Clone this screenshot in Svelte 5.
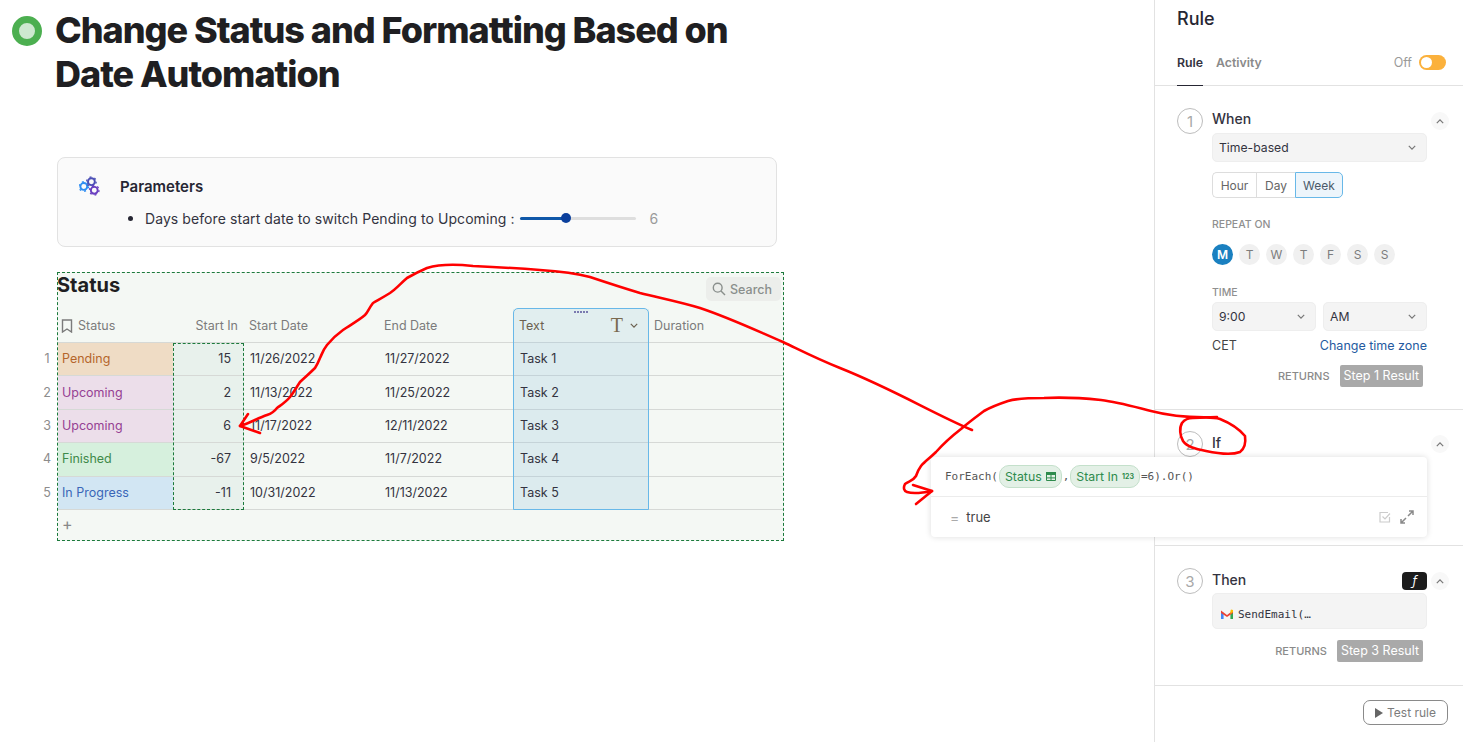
<script>
  const columns = ['Start In', 'Start Date', 'End Date'];
  const rows = [
    { status: 'Pending', tone: 'pending', startIn: 15, start: '11/26/2022', end: '11/27/2022', text: 'Task 1' },
    { status: 'Upcoming', tone: 'upcoming', startIn: 2, start: '11/13/2022', end: '11/25/2022', text: 'Task 2' },
    { status: 'Upcoming', tone: 'upcoming', startIn: 6, start: '11/17/2022', end: '12/11/2022', text: 'Task 3' },
    { status: 'Finished', tone: 'finished', startIn: -67, start: '9/5/2022', end: '11/7/2022', text: 'Task 4' },
    { status: 'In Progress', tone: 'progress', startIn: -11, start: '10/31/2022', end: '11/13/2022', text: 'Task 5' },
  ];
  const days = ['M', 'T', 'W', 'T', 'F', 'S', 'S'];
  const gears = [
    { x: 5, y: 11, color: '#2e8df2' },
    { x: 13, y: 6, color: '#4b4fb5' },
    { x: 16, y: 15, color: '#6a3fc0' },
  ];
</script>

{#snippet chevron(up = false)}
  <svg class="chev" viewBox="0 0 10 6" width="8" height="5">
    <path d={up ? 'M1 5 L5 1 L9 5' : 'M1 1 L5 5 L9 1'} fill="none" stroke="currentColor" stroke-width="1.5" />
  </svg>
{/snippet}

{#snippet collapse()}
  <span class="collapse">{@render chevron(true)}</span>
{/snippet}

<div class="page">
  <main class="main">
    <header class="title">
      <span class="dot"></span>
      <h1>Change Status and Formatting Based on Date Automation</h1>
    </header>

    <section class="params">
      <div class="params-head">
        <svg viewBox="0 0 22 21" width="21" height="20">
          {#each gears as g}
            <circle cx={g.x} cy={g.y} r="3.6" fill="none" stroke={g.color} stroke-width="2" />
            <circle cx={g.x} cy={g.y} r="5" fill="none" stroke={g.color} stroke-width="1.4" stroke-dasharray="2 3.24" />
          {/each}
        </svg>
        <strong>Parameters</strong>
      </div>
      <div class="param-row">
        <span class="bullet"></span>
        <span class="param-label">Days before start date to switch Pending to Upcoming :</span>
        <span class="slider"><span class="slider-fill"></span><span class="slider-thumb"></span></span>
        <span class="param-value">6</span>
      </div>
    </section>

    <section class="widget">
      <div class="widget-head">
        <h2>Status</h2>
        <span class="search">
          <svg viewBox="0 0 14 14" width="14" height="14">
            <circle cx="5.7" cy="5.7" r="4.4" fill="none" stroke="currentColor" stroke-width="1.4" />
            <path d="M9 9 L13 13" stroke="currentColor" stroke-width="1.5" />
          </svg>
          Search
        </span>
      </div>

      <div class="grid">
        <div class="cell head status-head">
          <svg viewBox="0 0 12 14" width="12" height="14">
            <path d="M1.5 1 H10.5 V13 L6 10 L1.5 13 Z" fill="none" stroke="currentColor" stroke-width="1.4" />
          </svg>
          Status
        </div>
        {#each columns as c, i}
          <div class="cell head" class:right={i === 0}>{c}</div>
        {/each}
        <div class="cell head text-head">
          Text
          <span class="type-t">T</span>
          {@render chevron()}
        </div>
        <div class="cell head">Duration</div>

        {#each rows as r, i}
          <div class="cell body status {r.tone}">
            <span class="row-num">{i + 1}</span>
            {r.status}
          </div>
          <div class="cell body right start-in">{r.startIn}</div>
          <div class="cell body">{r.start}</div>
          <div class="cell body">{r.end}</div>
          <div class="cell body text-col">{r.text}</div>
          <div class="cell body"></div>
        {/each}

        <span class="sel-start"></span>
        <span class="sel-text"><span class="grip"></span></span>
      </div>
      <div class="add">+</div>
    </section>
  </main>

  <aside class="side">
    <h3>Rule</h3>
    <nav class="tabs">
      <span class="tab active">Rule</span>
      <span class="tab">Activity</span>
      <span class="off">Off</span>
      <span class="toggle"><span class="knob"></span></span>
    </nav>

    <section class="step step1">
      <div class="step-head">
        <span class="num">1</span>
        <span class="step-name">When</span>
        {@render collapse()}
      </div>
      <div class="step-body">
        <div class="select">Time-based {@render chevron()}</div>
        <div class="segments">
          <span class="seg hour">Hour</span>
          <span class="seg day">Day</span>
          <span class="seg week">Week</span>
        </div>
        <div class="label repeat">REPEAT ON</div>
        <div class="days">
          {#each days as d, i}
            <span class="daydot" class:on={i === 0}>{d}</span>
          {/each}
        </div>
        <div class="label time">TIME</div>
        <div class="time-row">
          <div class="select">9:00 {@render chevron()}</div>
          <div class="select">AM {@render chevron()}</div>
        </div>
        <div class="zone"><span>CET</span><span class="link">Change time zone</span></div>
        <div class="returns"><span>RETURNS</span><span class="result">Step 1 Result</span></div>
      </div>
    </section>

    <section class="step step2">
      <div class="step-head">
        <span class="num">2</span>
        <span class="step-name">If</span>
        {@render collapse()}
      </div>
      <div class="popup">
        <div class="formula">ForEach(<span class="pill">Status<svg viewBox="0 0 10 9" width="10" height="9"><path d="M.5.5h9v8h-9zM.5 5.9h9M5 3v5.5" fill="none" stroke="currentColor" /><path d="M0 0h10v3H0z" fill="currentColor" /></svg></span>,<span class="pill">Start In<small>123</small></span>=6).Or()</div>
        <div class="outcome">
          <span class="eq">=</span>
          <span>true</span>
          <svg class="check" viewBox="0 0 12 12" width="12" height="12">
            <path d="M10.5 6v5H1V1.5h8" fill="none" stroke="#ccc" stroke-width="1.2" />
            <path d="M3.5 5.5 L6 8 L11 2.5" fill="none" stroke="#ccc" stroke-width="1.2" />
          </svg>
          <svg class="expand" viewBox="0 0 14 14" width="14" height="14">
            <path d="M8 6 L13 1 M9 1 H13 V5 M6 8 L1 13 M1 9 V13 H5" fill="none" stroke="#8a8a8a" stroke-width="1.5" />
          </svg>
        </div>
      </div>
    </section>

    <section class="step step3">
      <div class="step-head">
        <span class="num">3</span>
        <span class="step-name">Then</span>
        <span class="fx">ƒ</span>
        {@render collapse()}
      </div>
      <div class="step-body">
        <div class="action">
          <svg viewBox="0 0 12 10" width="12" height="10">
            <path d="M0 2 L0 10 H2.6 V4 Z" fill="#4285f4" />
            <path d="M12 2 L12 10 H9.4 V4 Z" fill="#34a853" />
            <path d="M0 1.5 L6 6 L12 1.5 L12 4 L6 8 L0 4 Z" fill="#ea4335" />
            <path d="M10 .5 L12 1 V3 L9.4 5 V2 Z" fill="#fbbc04" />
          </svg>
          <span>SendEmail(…</span>
        </div>
        <div class="returns"><span>RETURNS</span><span class="result">Step 3 Result</span></div>
      </div>
    </section>

    <footer class="foot">
      <span class="test">
        <svg viewBox="0 0 8 10" width="8" height="10"><path d="M0 0 L8 5 L0 10 Z" fill="#666" /></svg>
        Test rule
      </span>
    </footer>
  </aside>

  <!-- hand drawn annotation on top of the screenshot -->
  <svg class="ink" viewBox="0 0 1463 742" width="1463" height="742">
    <path d="M972 430 C930 412 895 390 840 368 C815 358 800 350 783 342 C755 330 730 318 700 308 C680 302 660 298 640 293 C620 287 605 282 590 277 C575 273 555 271 540 270 C515 268 495 267 473 266 C455 264 440 264 427 268 C420 271 414 274 407 278 C400 284 396 289 390 293 C382 298 378 300 373 303 C369 308 368 312 365 315 C358 321 350 325 343 330 C336 335 331 340 327 345 C323 350 322 354 320 358 C318 363 317 365 315 368 C309 374 305 377 300 382 C296 388 294 392 290 397 C286 402 281 405 277 408 C274 412 270 414 267 415 C258 418 250 423 240 426" />
    <path d="M248 414 L240 426 L260 433" />
    <path d="M1217 417 C1195 418 1170 416 1151 411 C1135 407 1118 402 1101 400 C1082 398 1062 397 1044 398 C1030 398 1018 398 1008 401 C999 404 991 407 984 411 C976 417 969 422 961 429 C952 436 944 443 936 452 C930 458 925 461 921 466 C918 470 917 473 916 476 C913 481 909 481 905 484 C903 488 904 491 907 492 C913 494 922 493 932 491" />
    <path d="M913 485 L932 491 L916 504" />
    <path d="M1193 418 C1205 417 1214 417 1220 419 C1230 423 1240 430 1245 436 C1246 443 1244 449 1240 452 C1232 455 1220 454 1206 451 C1196 449 1187 447 1183 441 C1180 436 1179 428 1182 423 C1185 419 1188 418 1193 418" />
  </svg>
</div>

<style>
  :global(body) {
    margin: 0;
    background: #fff;
    color: #262633;
    font-family: Inter, "Liberation Sans", sans-serif;
    font-size: 13px;
  }

  .page {
    position: relative;
    display: flex;
    width: 1463px;
    height: 742px;
    overflow: hidden;
  }

  .main {
    width: 1154px;
    flex: none;
    padding-top: 8px;
    box-sizing: border-box;
  }

  .title {
    display: flex;
    align-items: flex-start;
    padding-left: 12px;
  }

  .dot {
    box-sizing: border-box;
    width: 30px;
    height: 30px;
    margin-top: 8px;
    margin-right: 13px;
    flex: none;
    border-radius: 50%;
    background: #cde8cf;
    border: 7px solid #4caf50;
  }

  h1 {
    margin: 0;
    width: 720px;
    font-size: 36px;
    line-height: 44px;
    font-weight: 800;
    letter-spacing: -1.03px;
    color: #1f1f22;
  }

  .params {
    box-sizing: border-box;
    width: 720px;
    height: 90px;
    margin: 61px 0 0 57px;
    padding: 17px 21px;
    background: #fafafa;
    border: 1px solid #e2e2e2;
    border-radius: 8px;
  }

  .params-head {
    display: flex;
    align-items: center;
    gap: 20px;
    height: 22px;
  }

  .params-head strong {
    font-size: 15px;
    font-weight: 600;
  }

  .param-row {
    display: flex;
    align-items: center;
    height: 20px;
    margin-top: 11px;
    padding-left: 49px;
    font-size: 14px;
    letter-spacing: 0.08px;
    color: #333340;
  }

  .bullet {
    width: 5px;
    height: 5px;
    margin-right: 12px;
    border-radius: 50%;
    background: #262633;
  }

  .slider {
    position: relative;
    width: 116px;
    height: 3px;
    margin-left: 5px;
    background: #dedede;
    border-radius: 2px;
  }

  .slider-fill {
    position: absolute;
    inset: 0 70px 0 0;
    background: #0f57a8;
    border-radius: 2px;
  }

  .slider-thumb {
    position: absolute;
    left: 41px;
    top: -4px;
    width: 10px;
    height: 10px;
    border-radius: 50%;
    background: #0b3f9c;
  }

  .param-value {
    margin-left: 14px;
    color: #9a9a9a;
  }

  .widget {
    box-sizing: border-box;
    width: 727px;
    height: 269px;
    margin: 25px 0 0 57px;
    background: #f4f8f4;
    border: 1px dashed #1c7a3c;
  }

  .widget-head {
    display: flex;
    justify-content: space-between;
    height: 36px;
    padding-right: 2px;
  }

  h2 {
    margin: 0 0 0 -1px;
    font-size: 20px;
    line-height: 24px;
    font-weight: 700;
    color: #1f1f22;
  }

  .search {
    display: flex;
    align-items: center;
    gap: 4px;
    box-sizing: border-box;
    width: 75px;
    height: 24px;
    margin-top: 4px;
    padding-left: 6px;
    border-radius: 5px;
    background: #eceeeb;
    color: #8a8f8c;
    font-size: 12.5px;
    font-weight: 500;
  }

  .grid {
    position: relative;
    display: grid;
    grid-template-columns: 115px 71px 135px 134px 136px 134px;
    grid-template-rows: 34px repeat(5, 33.4px);
  }

  .cell {
    display: flex;
    align-items: center;
    box-sizing: border-box;
    padding: 0 5px;
    border-bottom: 1px solid #d6d9d6;
    white-space: nowrap;
  }

  .head {
    font-size: 12.5px;
    color: #7b7b7b;
  }

  .status-head {
    gap: 5px;
    padding-left: 3px;
  }

  .right {
    justify-content: flex-end;
    padding-right: 6px;
  }

  .body {
    padding-left: 6px;
    padding-bottom: 1px;
    font-size: 12.5px;
    color: #333340;
  }

  .body.right {
    padding-right: 13px;
  }

  .status {
    position: relative;
    padding-left: 4px;
  }

  .row-num {
    position: absolute;
    left: -16px;
    width: 10px;
    text-align: center;
    color: #8c8c8c;
  }

  .pending { background: #efdcc5; color: #b5652c; }
  .upcoming { background: #ecdeea; color: #963e93; }
  .finished { background: #d6f0dd; color: #3f8a4a; }
  .progress { background: #d2e6f3; color: #3a66b8; }

  .start-in {
    background: #e8f1ec;
  }

  .text-col {
    padding-left: 7px;
    background: #dcebee;
    border-bottom-color: #c5d3d8;
  }

  .text-head {
    padding-left: 6px;
    background: #e1eeef;
    color: #6b5f4e;
    border-bottom-color: #c5d3d8;
  }

  .type-t {
    margin-left: auto;
    margin-right: 7px;
    font-family: "Liberation Serif", serif;
    font-size: 20px;
    color: #7a6a50;
  }

  .text-head .chev {
    margin-right: 6px;
  }

  .sel-start {
    position: absolute;
    left: 115px;
    top: 34px;
    width: 71px;
    bottom: 0;
    box-sizing: border-box;
    border: 1px dashed #1c7a3c;
  }

  .sel-text {
    position: absolute;
    left: 455px;
    top: -1px;
    width: 136px;
    bottom: 0;
    box-sizing: border-box;
    border: 1px solid #68b8e8;
    border-radius: 5px 5px 0 0;
  }

  .grip {
    position: absolute;
    top: 2px;
    left: 60px;
    width: 14px;
    height: 2px;
    background: repeating-linear-gradient(90deg, #7a7ab0 0 2px, transparent 2px 3px);
  }

  .add {
    padding: 4px 0 0 4px;
    font-size: 16px;
    color: #888;
  }

  .side {
    box-sizing: border-box;
    width: 309px;
    flex: none;
    border-left: 1px solid #e2e2e2;
    display: flex;
    flex-direction: column;
  }

  h3 {
    margin: 8px 0 0 22px;
    font-size: 18px;
    line-height: 22px;
    font-weight: 500;
    color: #262633;
  }

  .tabs {
    display: flex;
    align-items: center;
    gap: 13px;
    height: 56px;
    padding: 9px 17px 0 22px;
    border-bottom: 1px solid #e2e2e2;
    box-sizing: border-box;
  }

  .tab {
    position: relative;
    font-size: 12.3px;
    font-weight: 600;
    color: #8a8a8a;
  }

  .tab.active {
    color: #333340;
  }

  .tab.active::after {
    content: '';
    position: absolute;
    left: 0;
    right: 0;
    bottom: -16px;
    height: 1px;
    background: #262633;
  }

  .off {
    margin-left: auto;
    font-size: 12.5px;
    color: #9a9a9a;
  }

  .toggle {
    width: 27px;
    height: 15px;
    margin-left: -6px;
    border-radius: 8px;
    background: #fbb13c;
    padding: 2px;
    box-sizing: border-box;
  }

  .knob {
    display: block;
    width: 11px;
    height: 11px;
    border-radius: 50%;
    background: #fff;
  }

  .step {
    position: relative;
    box-sizing: border-box;
    border-bottom: 1px solid #e2e2e2;
    padding: 22px 14px 0 22px;
  }

  .step1 { height: 324px; padding-top: 22px; }
  .step2 { height: 136px; padding-top: 21px; }
  .step3 { height: 140px; padding-top: 22px; }

  .step-head {
    display: flex;
    align-items: center;
    height: 26px;
  }

  .num {
    box-sizing: border-box;
    width: 26px;
    height: 26px;
    margin-right: 9px;
    flex: none;
    border: 1px solid #bdbdbd;
    border-radius: 50%;
    display: flex;
    align-items: center;
    justify-content: center;
    font-size: 15px;
    color: #a8a8a8;
  }

  .step-name {
    margin-top: -4px;
    font-size: 14px;
    font-weight: 500;
    color: #333340;
  }

  .step1 .step-name {
    margin-top: -6px;
  }

  .collapse {
    margin-left: auto;
    width: 18px;
    height: 18px;
    border-radius: 50%;
    background: #f8f8f8;
    display: flex;
    align-items: center;
    justify-content: center;
    color: #777;
  }

  .step-body {
    margin-left: 35px;
    margin-right: 22px;
    margin-top: -1px;
  }

  .select {
    box-sizing: border-box;
    display: flex;
    align-items: center;
    justify-content: space-between;
    height: 29px;
    padding: 0 10px 1px 6px;
    background: #f4f4f4;
    border: 1px solid #eeeeee;
    border-radius: 5px;
    font-size: 12.2px;
    color: #333340;
    flex: 1;
  }

  .select .chev {
    color: #777;
  }

  .segments {
    display: flex;
    height: 26px;
    margin-top: 10px;
  }

  .seg {
    box-sizing: border-box;
    display: flex;
    align-items: center;
    justify-content: center;
    border: 1px solid #dddddd;
    font-size: 12px;
    color: #666;
  }

  .hour { width: 44px; border-radius: 5px 0 0 5px; border-right: 0; }
  .day { width: 39px; border-right: 0; }
  .week {
    width: 48px;
    border-color: #68b8e8;
    border-radius: 0 5px 5px 0;
    background: #edf5fb;
    color: #4a5a6a;
  }

  .label {
    font-size: 10.5px;
    font-weight: 500;
    color: #8f8f8f;
  }

  .repeat { margin-top: 20px; line-height: 14px; }
  .time { margin-top: 21px; line-height: 14px; }

  .days {
    display: flex;
    gap: 6px;
    margin-top: 12px;
  }

  .daydot {
    width: 21px;
    height: 21px;
    border-radius: 50%;
    background: #f0f0f0;
    color: #7c7c7c;
    display: flex;
    align-items: center;
    justify-content: center;
    font-size: 12px;
  }

  .daydot.on {
    background: #1a80c0;
    color: #fff;
    font-weight: 600;
  }

  .time-row {
    display: flex;
    gap: 7px;
    margin-top: 2px;
  }

  .zone {
    display: flex;
    justify-content: space-between;
    margin-top: 7px;
    line-height: 16px;
    font-size: 12.5px;
    color: #444;
  }

  .link {
    color: #245aa0;
  }

  .returns {
    display: flex;
    align-items: center;
    justify-content: flex-end;
    gap: 10px;
    margin-top: 11px;
    margin-right: 4px;
    font-size: 11px;
    font-weight: 500;
    color: #8a8a8a;
  }

  .result {
    height: 22px;
    line-height: 22px;
    padding: 0 4px;
    background: #a9a9a9;
    border-radius: 2px;
    color: #fff;
    font-size: 12.5px;
    font-weight: 400;
  }

  .popup {
    position: absolute;
    top: 47px;
    right: 36px;
    width: 496px;
    height: 80px;
    background: #fff;
    border-radius: 4px;
    box-shadow: 0 0 6px rgba(0, 0, 0, 0.14);
  }

  .formula {
    display: flex;
    align-items: center;
    height: 39px;
    padding-left: 14px;
    border-bottom: 1px solid #ececec;
    font-family: "DejaVu Sans Mono", monospace;
    font-size: 11px;
    color: #555;
    white-space: pre;
  }

  .pill {
    display: inline-flex;
    align-items: center;
    gap: 4px;
    height: 21px;
    padding: 0 5px;
    margin: 0 1px;
    border: 1px solid #c4e0cb;
    border-radius: 10px;
    background: #e3f0e6;
    color: #2e8b4d;
    font-family: Inter, "Liberation Sans", sans-serif;
    font-size: 12.3px;
  }

  .pill small {
    font-size: 7px;
    font-weight: 700;
  }

  .outcome {
    display: flex;
    align-items: center;
    height: 40px;
    padding: 0 13px 0 19px;
    color: #444;
  }

  .eq {
    margin-right: 7px;
    color: #aaa;
    font-size: 14px;
  }

  .check {
    margin-left: auto;
    margin-right: 9px;
  }

  .fx {
    width: 25px;
    height: 18px;
    margin-left: auto;
    border-radius: 4px;
    background: #1c1c1c;
    color: #fff;
    display: flex;
    align-items: center;
    justify-content: center;
    font-family: "DejaVu Sans", sans-serif;
    font-style: italic;
    font-size: 12px;
  }

  .step3 .collapse {
    margin-left: 4px;
  }

  .action {
    box-sizing: border-box;
    display: flex;
    align-items: center;
    gap: 5px;
    height: 36px;
    padding: 6px 0 0 8px;
    margin-top: -1px;
    background: #f4f4f4;
    border: 1px solid #eeeeee;
    border-radius: 5px;
    font-family: "DejaVu Sans Mono", monospace;
    font-size: 11px;
    color: #333340;
  }

  .step3 .returns {
    margin-top: 11px;
  }

  .foot {
    display: flex;
    justify-content: flex-end;
    padding: 14px 15px 0 0;
  }

  .test {
    box-sizing: border-box;
    display: flex;
    align-items: center;
    justify-content: center;
    gap: 4px;
    width: 85px;
    height: 25px;
    border: 1px solid #8a8a8a;
    border-radius: 7px;
    font-size: 12px;
    color: #7c7c7c;
  }

  .ink {
    position: absolute;
    left: 0;
    top: 0;
    pointer-events: none;
    fill: none;
    stroke: #f00;
    stroke-width: 2.6;
    stroke-linecap: round;
    stroke-linejoin: round;
  }
</style>
